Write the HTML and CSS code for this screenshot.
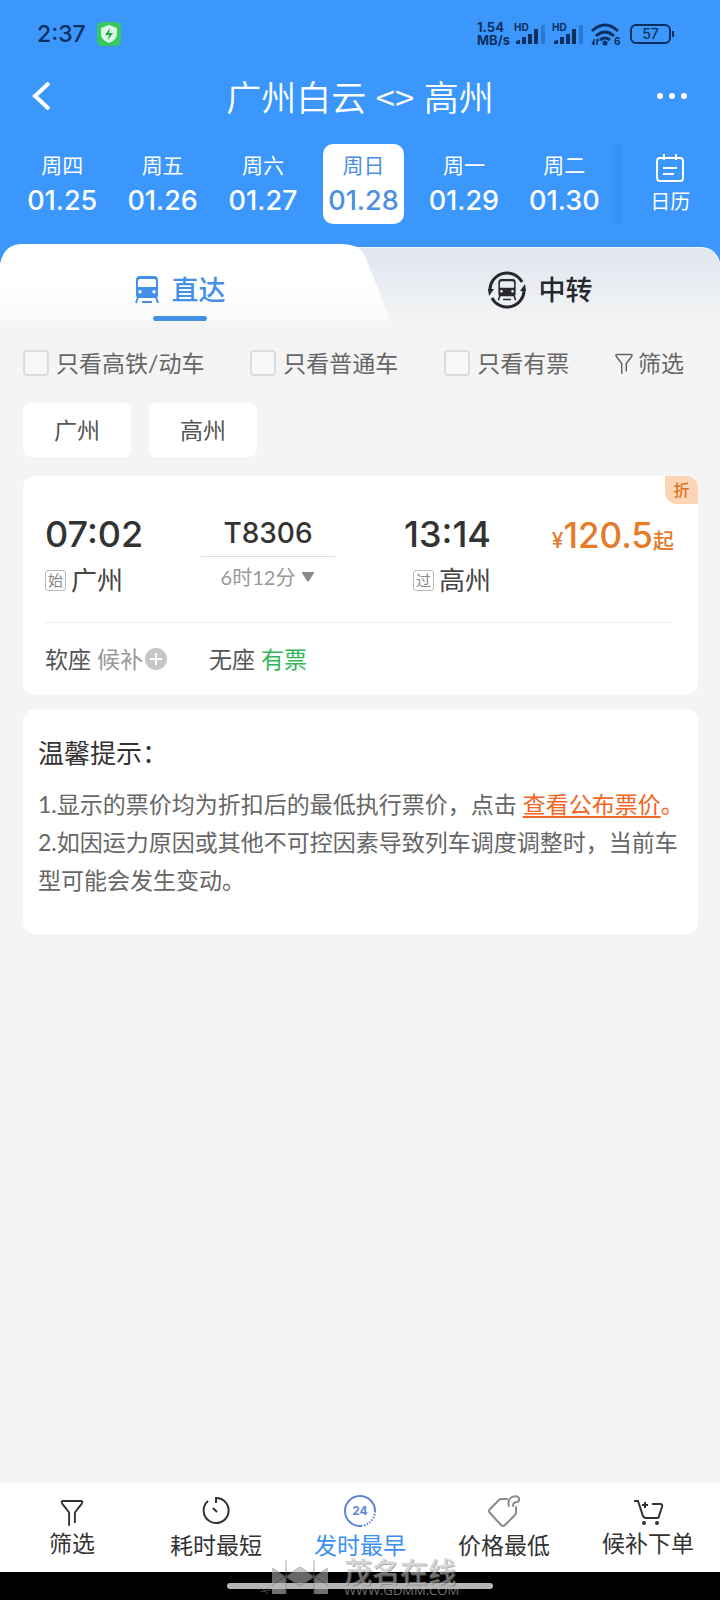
FILE: index.html
```html
<!DOCTYPE html>
<html lang="zh-CN">
<head>
<meta charset="utf-8">
<meta name="viewport" content="width=device-width, initial-scale=1">
<title>广州白云 - 高州</title>
<link rel="stylesheet" href="styles.css">
</head>
<body>
<svg class="defs" aria-hidden="true">
  <symbol id="funnel" viewBox="0 0 24 28">
    <path d="M9 27V14L2 5Q0 2 3 2h18q3 0 1 3l-7 9v10" fill="none" stroke="currentColor" stroke-width="2" stroke-linecap="round" stroke-linejoin="round"/>
  </symbol>
  <symbol id="train" viewBox="0 0 24 28">
    <path fill="currentColor" fill-rule="evenodd" d="M5 0h14q4 0 4 4v15q0 3-3 3H4q-3 0-3-3V4q0-4 4-4zM3 5v6h18V5q0-2-2-2H5Q3 3 3 5zM5 14a1.700 1.700 0 1 0 0 3.400a1.700 1.700 0 0 0 0-3.400zM19 14a1.700 1.700 0 1 0 0 3.400a1.700 1.700 0 0 0 0-3.400z"/>
    <path d="M3 21l-2 6M21 21l2 6M7 26h10" fill="none" stroke="currentColor" stroke-width="2"/>
  </symbol>
  <symbol id="signal" viewBox="0 0 34 24">
    <path fill="currentColor" d="M2 19q3-1 4-1v4H2zM8 15h4v7H8zM14 12h4v10h-4zM20 7h4v15h-4z"/>
    <path fill="currentColor" opacity=".3" d="M27 3h4v19h-4z"/>
  </symbol>
</svg>

<header class="header">
  <div class="status">
    <span class="clock">2:37</span>
    <svg class="shield" viewBox="0 0 24 24" aria-hidden="true">
      <rect width="24" height="24" rx="5" fill="#35c960"/>
      <path d="M12 3l8 3v6q0 6-8 9q-8-3-8-9V6z" fill="#dcf9e2"/>
      <path d="M13 6l-5 7h4l-1 5 5-7h-4z" fill="#20a84a"/>
    </svg>
    <span class="rate"><span>1.54</span><span>MB/s</span></span>
    <svg class="signal" viewBox="0 0 34 24" aria-hidden="true"><use href="#signal"/><text x="0" y="9" font-size="10" font-weight="700" fill="currentColor">HD</text></svg>
    <svg class="signal" viewBox="0 0 34 24" aria-hidden="true"><use href="#signal"/><text x="0" y="9" font-size="10" font-weight="700" fill="currentColor">HD</text></svg>
    <svg class="wifi" viewBox="0 0 32 24" aria-hidden="true">
      <path d="M2 9q13-12 26 0M6 14q9-8 18 0M10 18q5-4 10 0" fill="none" stroke="currentColor" stroke-width="3"/>
      <circle cx="15" cy="21" r="2.5" fill="currentColor"/>
      <path d="M4 17v6M2 20l2 3M7 23v-6M9 19l-2-2" fill="none" stroke="currentColor" stroke-width="1.5"/>
      <text x="24" y="23" font-size="10" font-weight="700" fill="currentColor">6</text>
    </svg>
    <span class="battery">57</span>
  </div>

  <div class="titlebar">
    <button class="icon-btn" aria-label="返回">
      <svg class="back" viewBox="0 0 20 28"><path d="M17 1L3 14l14 13" fill="none" stroke="#fff" stroke-width="4"/></svg>
    </button>
    <h1 class="title">广州白云 <span class="swap">&lt;&gt;</span> 高州</h1>
    <button class="icon-btn" aria-label="更多">
      <svg class="more" viewBox="0 0 32 8"><g fill="#fff"><circle cx="4" cy="4" r="3"/><circle cx="16" cy="4" r="3"/><circle cx="28" cy="4" r="3"/></g></svg>
    </button>
  </div>

  <div class="dates">
    <div class="days">
      <button class="day"><span>周四</span><b>01.25</b></button>
      <button class="day"><span>周五</span><b>01.26</b></button>
      <button class="day"><span>周六</span><b>01.27</b></button>
      <button class="day day-on" aria-current="date"><span>周日</span><b>01.28</b></button>
      <button class="day"><span>周一</span><b>01.29</b></button>
      <button class="day"><span>周二</span><b>01.30</b></button>
    </div>
    <button class="calendar">
      <svg class="cal-icon" viewBox="0 0 30 30" aria-hidden="true">
        <path d="M5 5h20q3 0 3 3v17q0 3-3 3H5q-3 0-3-3V8q0-3 3-3zM9 1v6M21 1v6M8 15h14M8 21h11" fill="none" stroke="#fff" stroke-width="2"/>
      </svg>
      <span>日历</span>
    </button>
  </div>
</header>

<nav class="tabs">
  <svg class="tabs-bg" viewBox="0 0 720 77" preserveAspectRatio="none" aria-hidden="true">
    <defs>
      <linearGradient id="g1" x1="0" y1="0" x2="0" y2="1"><stop offset="0" stop-color="#dfe5f0"/><stop offset="1" stop-color="#f3f4f4"/></linearGradient>
      <linearGradient id="g2" x1="0" y1="0" x2="0" y2="1"><stop offset="0.5" stop-color="#fff"/><stop offset="1" stop-color="#f9f9f9"/></linearGradient>
    </defs>
    <path d="M340 3h360q16 0 20 16v58H340z" fill="url(#g1)"/>
    <path d="M340 3.500h360q16 0 20 16" fill="none" stroke="#f4f8fe"/>
    <path d="M0 20Q4 0 22 0h320q16 0 22 10l27 67H0z" fill="url(#g2)"/>
  </svg>
  <button class="tab tab-on">
    <svg class="train" aria-hidden="true"><use href="#train"/></svg><span>直达</span>
  </button>
  <button class="tab">
    <svg class="transfer" viewBox="0 0 38 38" aria-hidden="true">
      <path d="M2 20A17 17 0 0 1 34 11M36 18A17 17 0 0 1 4 27" fill="none" stroke="currentColor" stroke-width="3"/>
      <path d="M0 18h6l-5 7zM38 20h-6l5-7z" fill="currentColor"/>
      <use href="#train" x="9" y="8" width="20" height="22"/>
    </svg><span>中转</span>
  </button>
</nav>

<main class="main">
  <div class="filters">
    <label class="check"><input type="checkbox"><span>只看高铁/动车</span></label>
    <label class="check"><input type="checkbox"><span>只看普通车</span></label>
    <label class="check"><input type="checkbox"><span>只看有票</span></label>
    <button class="filter-btn"><svg class="funnel-sm" aria-hidden="true"><use href="#funnel"/></svg><span>筛选</span></button>
  </div>
  <div class="chips">
    <button class="chip">广州</button>
    <button class="chip">高州</button>
  </div>

  <article class="card trip">
    <span class="discount">折</span>
    <div class="route">
      <div class="stop">
        <span class="time">07:02</span>
        <span class="station"><i class="mark">始</i>广州</span>
      </div>
      <div class="middle">
        <span class="train-no">T8306</span>
        <button class="duration">6时12分<svg class="caret" viewBox="0 0 14 10" aria-hidden="true"><path d="M1 0h12q1 0 0 1L8 9q-1 1-2 0L1 1z" fill="#8a8a8a"/></svg></button>
      </div>
      <div class="stop stop-end">
        <span class="time">13:14</span>
        <span class="station"><i class="mark">过</i>高州</span>
      </div>
      <div class="price"><small>¥</small>120.5<small>起</small></div>
    </div>
    <div class="seats">
      <span class="seat">软座 <span class="wait">候补</span><svg class="plus" viewBox="0 0 22 22" aria-hidden="true"><circle cx="11" cy="11" r="11" fill="#c6c6c6"/><path d="M11 5v12M5 11h12" stroke="#fff" stroke-width="2"/></svg></span>
      <span class="seat">无座 <span class="avail">有票</span></span>
    </div>
  </article>

  <section class="card tips">
    <h2 class="tips-title">温馨提示：</h2>
    <p class="tips-text">1.显示的票价均为折扣后的最低执行票价，点击 <span class="orange"><a class="link" href="#">查看公布票价</a>。</span></p>
    <p class="tips-text">2.如因运力原因或其他不可控因素导致列车调度调整时，当前车型可能会发生变动。</p>
  </section>
</main>

<nav class="bottom">
  <button class="sort">
    <svg class="sort-icon" viewBox="0 0 32 32" aria-hidden="true"><use href="#funnel" x="4" y="4" width="24" height="27"/></svg><span>筛选</span>
  </button>
  <button class="sort sort-low">
    <svg class="sort-icon" viewBox="0 0 32 32" aria-hidden="true"><path d="M8 6A12.500 12.500 0 1 0 16 3V8M13 13l4 4" fill="none" stroke="currentColor" stroke-width="2"/></svg><span>耗时最短</span>
  </button>
  <button class="sort sort-low sort-on">
    <svg class="sort-icon" viewBox="0 0 32 32" aria-hidden="true"><g fill="none" stroke="#5b86dc" stroke-width="2"><path d="M17 31A15 15 0 1 1 31 16"/><path d="M31 16A15 15 0 0 1 17 31" stroke-dasharray="1.500 1.500"/></g><text x="16" y="20" text-anchor="middle" font-size="12" font-weight="700" fill="#5b86dc">24</text></svg><span>发时最早</span>
  </button>
  <button class="sort sort-low">
    <svg class="sort-icon" viewBox="0 0 32 32" aria-hidden="true"><path d="M19 4h-5q-2 0-3 1L2 14q-2 2 0 4l11 12q2 2 4 0l10-10q1-1 1-3v-5M21 11q-2-6 3-9q5-2 7 1q1 3-2 4q-4 0-4 4" fill="none" stroke="#8a8a8a" stroke-width="2" stroke-linecap="round"/></svg><span>价格最低</span>
  </button>
  <button class="sort">
    <svg class="sort-icon" viewBox="0 0 32 32" aria-hidden="true"><path d="M2 6h4l5 15q1 2 3 2h11q2 0 2-2l3-9q1-3-2-3h-8M10 10h6M13 7v6" fill="none" stroke="currentColor" stroke-width="2"/><circle cx="12" cy="28" r="2" fill="currentColor"/><circle cx="25" cy="28" r="2" fill="currentColor"/></svg><span>候补下单</span>
  </button>
</nav>

<footer class="system">
  <span class="home"></span>
  <div class="watermark">
    <svg class="wm-logo" viewBox="0 0 72 38" aria-hidden="true">
      <path d="M16 10l14 9-14 8zM30 19L44 9v20zM44 9l14 10-14 10zM72 10L58 19l14 8z" fill="#aaa"/>
      <path d="M16 23l14-4v17H16zM58 19l14 4v13H58z" fill="#bbb"/>
      <path d="M30 2v34M58 2v34M16 10l28 18M72 10L44 28M16 27L44 9M44 9l28 18M4 34l10-2M6 30l6 6" fill="none" stroke="#777"/>
    </svg>
    <div class="wm-text"><span class="wm-name">茂名在线</span><span class="wm-url">WWW.GDMM.COM</span></div>
  </div>
</footer>
</body>
</html>
```
FILE: styles.css
```css
* { box-sizing: border-box; }

body {
  margin: 0;
  min-height: 100vh;
  display: flex;
  flex-direction: column;
  background: #f4f4f4;
  color: #333;
  font-family: Lato, "Noto Sans CJK SC", sans-serif;
  font-size: 23px;
  line-height: 32px;
}

button {
  margin: 0;
  padding: 0;
  border: 0;
  background: none;
  color: inherit;
  font: inherit;
}

svg { display: block; flex: none; }
.defs { position: absolute; width: 0; height: 0; }

/* header */
.header { background: #3b97fc; color: #fff; padding-bottom: 20px; }

.status {
  display: flex;
  align-items: center;
  gap: 4px;
  height: 68px;
  padding: 0 49px 0 37px;
  color: #0c2f60;
  font-family: Inter, sans-serif;
}
.clock { font-size: 23px; font-weight: 500; }
.shield { width: 24px; height: 24px; margin-left: 7px; }
.rate {
  display: flex;
  flex-direction: column;
  margin-left: auto;
  font-size: 13px;
  font-weight: 700;
  line-height: 13px;
}
.signal { width: 34px; height: 24px; }
.wifi { width: 32px; height: 24px; }
.battery {
  position: relative;
  width: 41px;
  height: 20px;
  margin-left: 4px;
  border: 2px solid #0c2f60;
  border-radius: 6px;
  text-align: center;
  font-size: 14px;
  font-weight: 500;
  line-height: 16px;
}
.battery::after {
  content: "";
  position: absolute;
  top: 5px;
  right: -5px;
  width: 2px;
  height: 6px;
  background: #0c2f60;
}

.titlebar {
  display: flex;
  align-items: center;
  justify-content: space-between;
  height: 56px;
  padding: 0 32px;
}
.icon-btn { display: flex; width: 32px; }
.back { width: 20px; height: 28px; }
.more { width: 32px; height: 8px; }
.title { margin: 0; font-size: 35px; font-weight: 350; line-height: 48px; }
.swap { font-family: "Noto Sans CJK SC", sans-serif; }

.dates { display: flex; margin-top: 20px; }
.days {
  flex: 618;
  display: grid;
  grid-template-columns: repeat(6, 1fr);
  padding: 0 6px 0 12px;
  background: linear-gradient(to left, #338df2, #3b97fc) right / 10px 100% no-repeat;
}
.day {
  display: flex;
  flex-direction: column;
  align-items: center;
  justify-self: center;
  width: 81px;
  height: 80px;
  padding-top: 5px;
  border-radius: 10px;
  font-size: 21px;
}
.day span { line-height: 32px; }
.day b { font-family: Inter, sans-serif; font-size: 27px; font-weight: 500; line-height: 40px; }
.day-on { background: #fff; color: #4b8fe2; }
.calendar {
  flex: 102;
  display: flex;
  flex-direction: column;
  align-items: center;
  gap: 2px;
  padding-top: 9px;
  font-size: 20px;
}
.cal-icon { width: 30px; height: 30px; }

/* tabs */
.tabs {
  position: relative;
  display: grid;
  grid-template-columns: 1fr 1fr;
  height: 77px;
  background: linear-gradient(#3b97fc 30px, #f4f4f4 30px);
}
.tabs-bg { position: absolute; inset: 0; width: 100%; height: 100%; }
.tab {
  position: relative;
  display: flex;
  align-items: center;
  justify-content: center;
  gap: 13px;
  padding-top: 14px;
  color: #26282b;
  font-size: 27px;
  font-weight: 500;
}
.tab-on { color: #4290e8; }
.tab-on::after {
  content: "";
  position: absolute;
  left: 50%;
  bottom: 0;
  width: 54px;
  height: 5px;
  margin-left: -27px;
  border-radius: 3px;
  background: #4290e8;
}
.train { width: 24px; height: 28px; }
.transfer { width: 38px; height: 38px; }

/* filters */
.main { flex: 1; padding: 26px 22px 26px 23px; }
.filters {
  display: flex;
  justify-content: space-between;
  align-items: center;
  padding-right: 14px;
  color: #666;
}
.check { display: flex; align-items: center; gap: 7px; }
.check input {
  appearance: none;
  width: 26px;
  height: 26px;
  margin: 0;
  border: 2px solid #dcdcdc;
  border-radius: 4px;
  background: #f7f7f7;
}
.filter-btn { display: flex; align-items: center; gap: 5px; }
.funnel-sm { width: 18px; height: 21px; }
.chips { display: flex; gap: 18px; margin: 24px 0 19px; }
.chip {
  width: 108px;
  height: 54px;
  border-radius: 8px;
  background: #fff;
  color: #555;
}

/* cards */
.card {
  position: relative;
  border-radius: 12px;
  background: #fff;
}
.trip { padding: 34px 24px 20px 22px; }
.discount {
  position: absolute;
  top: 0;
  right: 0;
  width: 33px;
  height: 28px;
  border-radius: 0 12px 0 12px;
  background: #fdd5b5;
  color: #d9752b;
  font-size: 16px;
  font-weight: 500;
  line-height: 27px;
  text-align: center;
}
.route {
  display: grid;
  grid-template-columns: 156fr 134fr 156fr 183fr;
  padding-bottom: 22px;
  border-bottom: 1px solid #eee;
}
.time, .train-no, .price { font-family: Inter, "Noto Sans CJK SC", sans-serif; font-weight: 500; }
.stop { display: flex; flex-direction: column; align-items: flex-start; gap: 3px; }
.stop-end { align-items: flex-end; }
.time { font-size: 36px; line-height: 48px; }
.station { display: flex; align-items: center; gap: 5px; font-size: 26px; line-height: 39px; color: #444; }
.mark {
  width: 21px;
  height: 21px;
  border: 1px solid #bbb;
  border-radius: 3px;
  color: #888;
  font-size: 15px;
  font-style: normal;
  line-height: 19px;
  text-align: center;
}
.middle { display: flex; flex-direction: column; align-items: center; }
.train-no {
  align-self: stretch;
  border-bottom: 1px solid #ddd;
  font-size: 28px;
  line-height: 46px;
  text-align: center;
}
.duration { display: flex; align-items: center; gap: 6px; margin-top: 4px; font-size: 20px; color: #999; }
.caret { width: 14px; height: 10px; }
.price { color: #e47b29; font-size: 35px; line-height: 50px; text-align: right; white-space: nowrap; }
.price small { font-size: 21px; }
.seats { display: flex; gap: 42px; padding-top: 20px; color: #555; }
.seat { display: flex; align-items: center; gap: 6px; }
.wait { color: #999; }
.plus { width: 22px; height: 22px; margin-left: -4px; }
.avail { color: #31b65c; }

.tips { margin-top: 14px; padding: 24px 8px 35px 15px; }
.tips-title { margin: 0 0 12px; font-size: 26px; font-weight: 400; line-height: 40px; }
.tips-text { margin: 0; color: #666; line-height: 38px; }
.orange, .link { color: #f26522; }
.link { text-underline-offset: 3px; }

/* bottom bar */
.bottom {
  display: grid;
  grid-template-columns: repeat(5, 1fr);
  height: 89px;
  background: #fff;
}
.sort { display: flex; flex-direction: column; align-items: center; gap: 3px; padding-top: 12px; line-height: 26px; }
.sort-low { gap: 5px; }
.sort-icon { width: 32px; height: 32px; font-family: Inter, sans-serif; }
.sort-on { color: #3b8ff0; }

.system {
  position: relative;
  display: flex;
  justify-content: center;
  height: 28px;
  padding-top: 11px;
  background: #000;
}
.home { width: 37%; height: 6px; border-radius: 3px; background: #b5b5b5; }
.watermark {
  position: absolute;
  left: 50%;
  bottom: 4px;
  display: flex;
  align-items: flex-end;
  gap: 16px;
  margin-left: -104px;
  opacity: 0.6;
  color: #bbb;
}
.wm-logo { width: 72px; height: 38px; }
.wm-text { display: flex; flex-direction: column; }
.wm-name { font-size: 28px; font-weight: 500; line-height: 24px; text-shadow: 1px 1px 0 #777; }
.wm-url { font-family: "Open Sans", sans-serif; font-size: 13px; line-height: 12px; }
```
